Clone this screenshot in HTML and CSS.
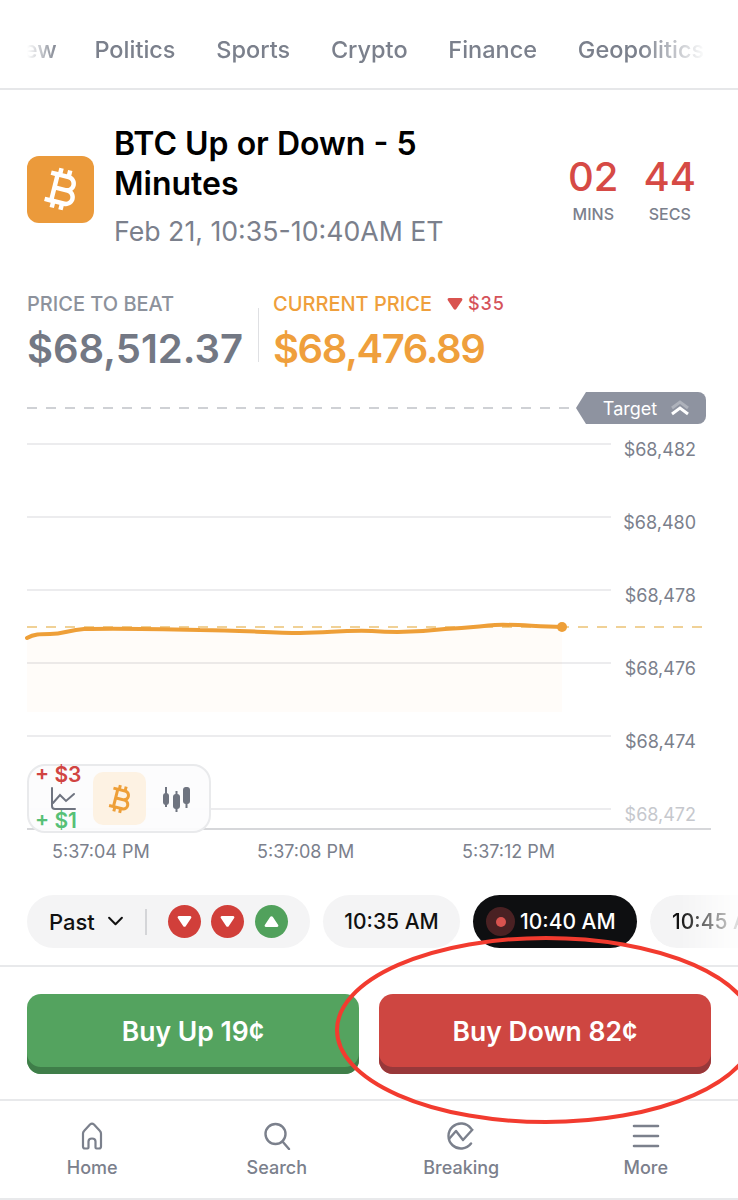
FILE: index.html
```html
<!DOCTYPE html>
<html lang="en">
<head>
<meta charset="utf-8">
<title>BTC Up or Down - 5 Minutes</title>
<link rel="stylesheet" href="styles.css">
</head>
<body>
<div class="page">
  <nav class="topnav">
    <div class="topnav-row">
      <span class="cut">New</span><span>Politics</span><span>Sports</span><span>Crypto</span><span>Finance</span><span>Geopolitics</span>
    </div>
  </nav>

  <header class="market">
    <div class="coin">
      <svg viewBox="0 0 24 24" width="54" height="54"><path transform="rotate(14 12 12)" fill="#fff" d="M17.06 11.57c.59-.69.94-1.59.94-2.57 0-1.86-1.27-3.43-3-3.87V3h-2v2h-2V3H9v2H6v2h2v10H6v2h3v2h2v-2h2v2h2v-2c2.21 0 4-1.79 4-4 0-1.45-.78-2.73-1.94-3.43zM10 7h4c1.1 0 2 .9 2 2s-.9 2-2 2h-4V7zm5 10h-5v-4h5c1.1 0 2 .9 2 2s-.9 2-2 2z"/></svg>
    </div>
    <div class="market-text">
      <h1>BTC Up or Down - 5 Minutes</h1>
      <p>Feb 21, 10:35-10:40AM ET</p>
    </div>
    <div class="timer">
      <div class="timer-cell"><b>02</b><span>MINS</span></div>
      <div class="timer-cell"><b>44</b><span>SECS</span></div>
    </div>
  </header>

  <section class="prices">
    <div class="price beat">
      <div class="price-label">PRICE TO BEAT</div>
      <div class="price-value">$68,512.37</div>
    </div>
    <div class="price current">
      <div class="price-label">CURRENT PRICE
        <span class="delta"><svg viewBox="0 0 16 14" width="16" height="14"><path fill="#d9534f" d="M2 1h12c1.2 0 1.8 1.2 1.2 2.2L9.3 12c-.6.9-2 .9-2.600 0L.8 3.200C.2 2.200.8 1 2 1z"/></svg>$35</span>
      </div>
      <div class="price-value">$68,476.89</div>
    </div>
  </section>

  <section class="chart">
    <div class="target-row">
      <div class="target-line"></div>
      <div class="target-tag">Target
        <svg viewBox="0 0 22 18" width="22" height="18"><path d="M3 9l8-6 8 6" fill="none" stroke="#aeb2bb" stroke-width="3"/><path d="M3 15l8-6 8 6" fill="none" stroke="#fff" stroke-width="3"/></svg>
      </div>
    </div>
    <div class="grid">
      <div class="grid-row"><i></i><span>$68,482</span></div>
      <div class="grid-row"><i></i><span>$68,480</span></div>
      <div class="grid-row"><i></i><span>$68,478</span></div>
      <div class="grid-row"><i></i><span>$68,476</span></div>
      <div class="grid-row"><i></i><span>$68,474</span></div>
      <div class="grid-row faint"><i></i><span>$68,472</span></div>
    </div>
    <div class="axis"></div>
    <div class="times"><span>5:37:04 PM</span><span>5:37:08 PM</span><span>5:37:12 PM</span></div>

    <svg class="plot" viewBox="0 0 738 120" width="738" height="120">
      <path d="M27 27C34 23 40 23 50 23C64 23 68 19 84 18H200C240 18 270 22 300 22C330 22 340 18 372 19C400 22 420 21 445 17C470 16 480 14 495 13C510 12 530 14 562 15V100H27z" fill="#f9a94b" fill-opacity=".03"/>
      <line x1="27" y1="15" x2="703" y2="15" stroke="#f0d196" stroke-width="2" stroke-dasharray="10 9"/>
      <path d="M27 26C34 22 40 22 50 22C64 22 68 18 84 17C120 16 160 17 200 18C240 18 270 21 300 21C330 21 340 18 372 19C400 21 420 20 445 17C470 16 480 14 495 13C510 12 530 14 562 15" fill="none" stroke="#ee9f38" stroke-width="4" stroke-linecap="round"/>
      <circle cx="562" cy="15" r="5" fill="#ee9f38"/>
    </svg>

    <div class="switcher">
      <svg class="sw-line" viewBox="0 0 26 24" width="26" height="24"><path d="M2 1v18c0 2 1 3 3 3h20M3 16l7-8 6 6 8-7" fill="none" stroke="#6f7480" stroke-width="2" stroke-linecap="round"/></svg>
      <span class="gain up">+ $3</span>
      <span class="gain down">+ $1</span>
      <div class="sw-btc">
        <svg viewBox="0 0 24 24" width="36" height="36"><path transform="rotate(14 12 12)" fill="#ee9f38" d="M17.06 11.57c.59-.69.94-1.59.94-2.57 0-1.86-1.27-3.43-3-3.87V3h-2v2h-2V3H9v2H6v2h2v10H6v2h3v2h2v-2h2v2h2v-2c2.21 0 4-1.79 4-4 0-1.45-.78-2.73-1.94-3.43zM10 7h4c1.1 0 2 .9 2 2s-.9 2-2 2h-4V7zm5 10h-5v-4h5c1.1 0 2 .9 2 2s-.9 2-2 2z"/></svg>
      </div>
      <svg class="sw-candle" viewBox="0 0 30 26" width="30" height="26"><g fill="#6f7480"><rect x="1" y="7" width="6" height="12" rx="3"/><rect x="3" y="1" width="2" height="20"/><rect x="11" y="8" width="7" height="15" rx="3"/><rect x="13.500" y="5" width="2" height="22"/><rect x="21" y="1" width="7" height="17" rx="3"/><rect x="23.500" y="1" width="2" height="21"/></g></svg>
    </div>
  </section>

  <div class="pills">
    <div class="pill past">
      <span class="past-label">Past</span>
      <svg viewBox="0 0 18 12" width="17" height="11"><path d="M2 2l7 7 7-7" fill="none" stroke="#111" stroke-width="2.200" stroke-linecap="round" stroke-linejoin="round"/></svg>
      <i class="past-sep"></i>
      <span class="dot red"><svg viewBox="0 0 16 14" width="15" height="13"><path fill="#fff" d="M2 1h12c1.200 0 1.800 1.200 1.200 2.200L9.300 12c-.6.9-2 .9-2.600 0L.8 3.200C.2 2.200.8 1 2 1z"/></svg></span>
      <span class="dot red"><svg viewBox="0 0 16 14" width="15" height="13"><path fill="#fff" d="M2 1h12c1.200 0 1.800 1.200 1.200 2.200L9.300 12c-.6.9-2 .9-2.600 0L.8 3.200C.2 2.200.8 1 2 1z"/></svg></span>
      <span class="dot green"><svg viewBox="0 0 16 14" width="15" height="13"><path fill="#fff" d="M2 13h12c1.200 0 1.800-1.200 1.200-2.200L9.300 2c-.6-.9-2-.9-2.600 0L.8 10.800C.2 11.800.8 13 2 13z"/></svg></span>
    </div>
    <div class="pill time">10:35 AM</div>
    <div class="pill time live"><span class="live-dot"></span>10:40 AM</div>
    <div class="pill time next">10:45 AM</div>
  </div>

  <div class="actions">
    <button class="buy buy-up">Buy Up 19¢</button>
    <button class="buy buy-down">Buy Down 82¢</button>
  </div>

  <footer class="tabs">
    <div class="tab">
      <svg viewBox="0 0 28 28" width="28" height="28"><path d="M7 26.500c-1.500 0-2-.8-2-2V11.500c0-1 .3-1.700 1-2.400L12 2.500c1.200-1.100 2.800-1.100 4 0l6 6.600c.7.700 1 1.400 1 2.400v13c0 1.200-.5 2-2 2h-2.500c-.7 0-1-.4-1-1v-6c0-1.500-1-3-3.500-3s-3.500 1.500-3.500 3v6c0 .6-.3 1-1 1z" fill="none" stroke="#7b808c" stroke-width="2.200" stroke-linejoin="round"/></svg>
      <span>Home</span>
    </div>
    <div class="tab">
      <svg viewBox="0 0 28 28" width="28" height="28"><circle cx="12.500" cy="12" r="10" fill="none" stroke="#7b808c" stroke-width="2.400"/><path d="M19.500 19.500L26 27" fill="none" stroke="#7b808c" stroke-width="2.400" stroke-linecap="round"/></svg>
      <span>Search</span>
    </div>
    <div class="tab">
      <svg viewBox="0 0 28 28" width="28" height="28"><path d="M24 6.500A12.500 12.500 0 1 0 24 21.500" fill="none" stroke="#7b808c" stroke-width="2.400" stroke-linecap="round"/><path d="M2 17l7-8 7 9 10-11" fill="none" stroke="#7b808c" stroke-width="2.400" stroke-linejoin="round"/></svg>
      <span>Breaking</span>
    </div>
    <div class="tab">
      <svg viewBox="0 0 28 28" width="28" height="28"><path d="M2 4h24M2 14h24M2 24h24" fill="none" stroke="#7b808c" stroke-width="2.600" stroke-linecap="round"/></svg>
      <span>More</span>
    </div>
  </footer>

  <svg class="scribble" viewBox="0 0 738 200" width="738" height="200"><ellipse cx="546" cy="94" rx="209" ry="92" fill="none" stroke="#f23b2f" stroke-width="4"/></svg>
</div>
</body>
</html>
```
FILE: styles.css
```css
* { box-sizing: border-box; }
html, body { margin: 0; padding: 0; background: #fff; }
body { font-family: Inter, "Noto Sans", sans-serif; color: #111; }
.page { position: relative; width: 738px; height: 1200px; overflow: hidden; background: #fff; border-bottom: 2px solid #e8e9eb; }

.topnav { height: 90px; border-bottom: 2px solid #e6e7e9; padding-top: 35px; overflow: hidden; }
.topnav-row {
  display: flex; gap: 40.750px; margin-left: 6px; width: 698px; white-space: nowrap;
  font-size: 23.500px; line-height: 30px; font-weight: 500; color: #7b808c;
  -webkit-mask-image: linear-gradient(to right, transparent 21px, #000 52px, #000 634px, transparent 700px);
  mask-image: linear-gradient(to right, transparent 21px, #000 52px, #000 634px, transparent 700px);
}
.cut { margin-right: -3px; }

.market { display: flex; align-items: center; padding: 34px 42px 0 27px; height: 158px; }
.coin { width: 67px; height: 67px; flex: none; border-radius: 12px; background: #eb9a3b; display: flex; align-items: center; justify-content: center; margin-top: 6px; margin-right: 20px; }
.market-text { width: 360px; flex: none; }
.market-text h1 { margin: 0; font-size: 32px; line-height: 40px; font-weight: 600; color: #000; }
.market-text p { margin: 10px 0 0; font-size: 26.700px; line-height: 34px; color: #7b808c; }
.timer { display: flex; gap: 25px; margin-left: auto; margin-top: 6px; }
.timer-cell { display: flex; flex-direction: column; align-items: center; }
.timer-cell b { font-size: 40px; line-height: 44px; font-weight: 500; color: #d64a45; }
.timer-cell span { font-size: 16px; line-height: 20px; font-weight: 500; color: #7b808c; margin-top: 5px; }

.prices { display: flex; padding: 53px 0 0 27px; height: 142px; }
.price-label { font-size: 20px; line-height: 24px; font-weight: 500; }
.price-value { font-size: 40px; line-height: 50px; font-weight: 600; margin-top: 8px; white-space: nowrap; }
.beat { width: 232px; border-right: 1px solid #dfe0e3; height: 54px; margin-top: 7px; }
.beat .price-label { color: #8d929c; margin-top: -16px; }
.beat .price-value { color: #737884; }
.current { padding-left: 14px; }
.current .price-label { color: #ef9f3c; margin-top: -9px; display: flex; align-items: center; gap: 15px; }
.current .price-value { color: #ef9f3c; letter-spacing: -1.400px; }
.delta { display: inline-flex; align-items: center; gap: 5px; color: #d5535a; font-size: 18px; letter-spacing: 1px; }

.chart { position: relative; height: 476px; }
.target-row { display: flex; align-items: center; padding: 0 32px 0 27px; height: 32px; margin-top: 2px; }
.target-line { flex: 1; height: 2px; background: repeating-linear-gradient(to right, #cfd1d5 0 10px, transparent 10px 19px); }
.target-tag {
  width: 130px; height: 32px; background: #8e93a0; color: #fff; font-size: 18px; border-radius: 0 8px 8px 0;
  display: flex; align-items: center; justify-content: center; gap: 12px; padding-left: 12px;
  clip-path: polygon(0 50%, 10px 0, 100% 0, 100% 100%, 10px 100%);
}
.grid { padding: 19px 27px 0; }
.grid-row { position: relative; display: flex; height: 73px; }
.grid-row i { display: block; width: 584px; height: 2px; background: #ececee; }
.grid-row span { position: absolute; right: 15px; top: -5px; font-size: 18px; line-height: 24px; color: #7b808c; }
.grid-row.faint span { color: #c6c8cd; }
.axis { height: 2px; margin: -53px 27px 0; background: #d6d7da; }
.times { display: flex; padding: 10px 0 0; margin-left: 52px; gap: 58px; font-size: 18px; line-height: 24px; color: #7b808c; white-space: nowrap; }
.times span { width: 147px; flex: none; }

.plot { position: absolute; left: 0; top: 220px; }

.switcher {
  position: absolute; left: 27px; top: 372px; width: 184px; height: 69px;
  border: 2px solid #e9eaec; border-radius: 18px; background: rgba(252,252,253,.95);
}
.sw-line { position: absolute; left: 21px; top: 21px; }
.sw-btc { position: absolute; left: 64px; top: 6px; width: 53px; height: 53px; border-radius: 10px; background: #fdf2e3; display: flex; align-items: center; justify-content: center; }
.sw-candle { position: absolute; left: 133px; top: 20px; }
.gain { position: absolute; left: 6px; font-size: 21px; line-height: 24px; font-weight: 600; white-space: nowrap; }
.gain.up { top: -3px; color: #d14441; }
.gain.down { top: 43px; color: #56c076; }

.pills { display: flex; gap: 13px; padding-left: 27px; height: 53px; white-space: nowrap; margin-top: 27px; }
.pill { height: 53px; flex: none; border-radius: 27px; background: #f4f4f5; display: flex; align-items: center; font-size: 21px; font-weight: 500; color: #111; }
.past { width: 283px; padding-left: 22px; }
.past-label { margin-right: 12px; font-size: 22px; }
.past-sep { width: 2px; height: 26px; background: #d4d5d8; margin: 0 21px 0 21px; }
.dot { width: 33px; height: 33px; border-radius: 50%; display: flex; align-items: center; justify-content: center; margin-right: 10.500px; }
.dot.red { background: #d13f3a; }
.dot.green { background: #51a15c; }
.time { width: 137px; justify-content: center; }
.live { width: 164px; background: #0e0f11; color: #fff; gap: 5px; justify-content: flex-start; padding-left: 13px; }
.live-dot { width: 29px; height: 29px; border-radius: 50%; background: #4a2123; position: relative; flex: none; }
.live-dot::after { content: ""; position: absolute; left: 9.500px; top: 9.500px; width: 10px; height: 10px; border-radius: 50%; background: #d9534f; }
.next { width: 137px; justify-content: flex-start; padding-left: 22px; -webkit-mask-image: linear-gradient(to right, #000 30px, rgba(0,0,0,.15) 85px); mask-image: linear-gradient(to right, #000 30px, rgba(0,0,0,.15) 85px); }

.actions { margin-top: 17px; border-top: 2px solid #e8e9eb; display: flex; gap: 20px; padding: 27px 27px 26px; height: 134px; }
.buy { flex: 1; height: 80px; border: 0; border-radius: 14px; color: #fff; font: 600 26.500px Inter, sans-serif; padding: 0 0 6px; }
.buy-up { background: #54a35f; box-shadow: inset 0 -7px 0 #3f7e49; }
.buy-down { background: #ce4641; box-shadow: inset 0 -7px 0 #98383a; }

.tabs { border-top: 2px solid #e8e9eb; display: flex; padding-top: 21px; margin: 0; }
.tab { flex: 1; display: flex; flex-direction: column; align-items: center; color: #7b808c; font-size: 18px; line-height: 24px; font-weight: 500; gap: 6px; }

.scribble { position: absolute; left: 0; top: 936px; pointer-events: none; }
```
